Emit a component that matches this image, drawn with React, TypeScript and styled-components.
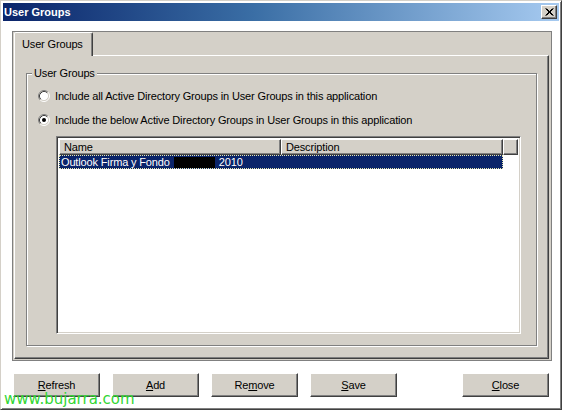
import React from "react";
import styled, { createGlobalStyle } from "styled-components";

const Global = createGlobalStyle`
  html, body { margin: 0; padding: 0; background: #ffffff; }
  body { font-family: "Liberation Sans", Arial, sans-serif; font-size: 11px; color: #000; letter-spacing: -0.15px; }
  * { box-sizing: border-box; }
`;

const Window = styled.div`
  position: relative;
  width: 562px;
  height: 410px;
  background: #ffffff;
  border: 1px solid;
  border-color: #d4d0c8 #404040 #404040 #d4d0c8;
  box-shadow: inset 1px 1px 0 #ffffff, inset -1px -1px 0 #808080;
  padding: 2px;
  display: flex;
  flex-direction: column;
  overflow: hidden;
`;

const TitleBar = styled.div`
  height: 18px;
  flex: none;
  display: flex;
  align-items: center;
  justify-content: space-between;
  padding: 0 2px 0 1px;
  background: linear-gradient(to right, #0a246a 0%, #3a6ea5 45%, #a6caf0 100%);
`;

const TitleText = styled.span`
  color: #ffffff;
  font-weight: bold;
  font-size: 11px;
  letter-spacing: 0;
  font-family: "Liberation Sans", Arial, sans-serif;
`;

const CloseBtn = styled.div`
  width: 16px;
  height: 14px;
  background: #d4d0c8;
  border: 1px solid;
  border-color: #ffffff #404040 #404040 #ffffff;
  box-shadow: inset -1px -1px 0 #808080;
  display: flex;
  align-items: center;
  justify-content: center;
`;

const Body = styled.div`
  flex: 1;
  display: flex;
  flex-direction: column;
  padding: 10px 8px 0 9px;
`;

const Panel = styled.div`
  height: 330px;
  width: 540px;
  background: #d4d0c8;
  border: 1px solid #808080;
  padding: 1px 2px 1px 1px;
  display: flex;
  flex-direction: column;
`;

const TabStrip = styled.div`
  height: 23px;
  display: flex;
  align-items: flex-end;
  position: relative;
  z-index: 1;
  margin-bottom: -1px;
`;

const Tab = styled.div`
  height: 24px;
  width: 79px;
  background: #d4d0c8;
  border: 1px solid;
  border-bottom: none;
  border-color: #ffffff #404040 transparent #ffffff;
  box-shadow: inset -1px 0 0 #808080;
  border-radius: 2px 2px 0 0;
  display: flex;
  align-items: center;
  padding-left: 7px;
  padding-bottom: 1px;
`;

const Page = styled.div`
  flex: 1;
  display: flex;
  flex-direction: column;
  border: 1px solid;
  border-color: #ffffff #404040 #404040 #ffffff;
  box-shadow: inset -1px -1px 0 #808080;
  padding: 17px 11px 12px 11px;
`;

const Group = styled.div`
  position: relative;
  flex: 1;
  display: flex;
  flex-direction: column;
  border: 1px solid #808080;
  box-shadow: inset 1px 1px 0 #ffffff, 1px 1px 0 #ffffff;
  padding: 10px 15px 11px 11px;
`;

const Legend = styled.span`
  position: absolute;
  top: -7px;
  left: 5px;
  padding: 0 2px;
  background: #d4d0c8;
  line-height: 13px;
`;

const RadioRow = styled.div`
  height: 24px;
  display: flex;
  align-items: center;
  gap: 5px;
`;

const List = styled.div`
  flex: 1;
  margin-left: 18px;
  margin-top: 4px;
  background: #ffffff;
  border: 1px solid;
  border-color: #808080 #ffffff #ffffff #808080;
  box-shadow: inset 1px 1px 0 #404040, inset -1px -1px 0 #d4d0c8;
  padding: 2px;
  display: flex;
  flex-direction: column;
`;

const Header = styled.div`
  display: flex;
  height: 16px;
  background: #d4d0c8;
`;

const HeadCell = styled.div<{ $w?: number }>`
  ${(p) => (p.$w ? `width: ${p.$w}px;` : "flex: 1;")}
  height: 16px;
  border: 1px solid;
  border-color: #ffffff #404040 #404040 #ffffff;
  box-shadow: inset -1px -1px 0 #808080;
  padding-left: 4px;
  display: flex;
  align-items: center;
`;

const Row = styled.div<{ $w: number }>`
  width: ${(p) => p.$w}px;
  height: 14px;
  background: #0a246a;
  color: #ffffff;
  outline: 1px dotted #e8e8b0;
  outline-offset: -1px;
  display: flex;
  align-items: center;
  padding-left: 2px;
`;

const Redacted = styled.span`
  display: inline-block;
  width: 41px;
  height: 11px;
  background: #000000;
  margin: 0 4px 0 4px;
`;

const Buttons = styled.div`
  display: flex;
  gap: 12px;
  padding: 12px 2px 0 1px;
`;

const Btn = styled.div<{ $push?: boolean }>`
  width: 87px;
  height: 24px;
  background: #d4d0c8;
  border: 1px solid;
  border-color: #ffffff #404040 #404040 #ffffff;
  box-shadow: inset -1px -1px 0 #808080;
  display: flex;
  align-items: center;
  justify-content: center;
  ${(p) => (p.$push ? "margin-left: auto;" : "")}
`;

const Mn = styled.span`
  text-decoration: underline;
`;

const Watermark = styled.div`
  position: absolute;
  left: 3px;
  bottom: 1px;
  color: #33d633;
  font-family: "DejaVu Sans", Verdana, sans-serif;
  font-size: 15px;
  line-height: 17px;
  letter-spacing: 0;
`;

const Radio: React.FC<{ checked?: boolean }> = ({ checked }) => (
  <svg width="12" height="12" viewBox="0 0 12 12">
    <circle cx="6" cy="6" r="4.5" fill="#ffffff" />
    <path d="M 2.11 9.89 A 5.5 5.5 0 0 1 9.89 2.11" stroke="#808080" strokeWidth="1" fill="none" />
    <path d="M 9.89 2.11 A 5.5 5.5 0 0 1 2.11 9.89" stroke="#ffffff" strokeWidth="1" fill="none" />
    <path d="M 2.82 9.18 A 4.5 4.5 0 0 1 9.18 2.82" stroke="#404040" strokeWidth="1" fill="none" />
    <path d="M 9.18 2.82 A 4.5 4.5 0 0 1 2.82 9.18" stroke="#d4d0c8" strokeWidth="1" fill="none" />
    {checked && <circle cx="6" cy="6" r="2" fill="#000000" />}
  </svg>
);

export default function App() {
  return (
    <>
      <Global />
      <Window>
        <TitleBar>
          <TitleText>User Groups</TitleText>
          <CloseBtn>
            <svg width="9" height="8" viewBox="0 0 9 8">
              <path d="M1 0.5 L8 7.5 M2 0.5 L9 7.5 M8 0.5 L1 7.5 M9 0.5 L2 7.5" stroke="#000" strokeWidth="1" transform="translate(-0.5 0)" />
            </svg>
          </CloseBtn>
        </TitleBar>
        <Body>
          <Panel>
            <TabStrip>
              <Tab>User Groups</Tab>
            </TabStrip>
            <Page>
              <Group>
                <Legend>User Groups</Legend>
                <RadioRow>
                  <Radio />
                  <span>Include all Active Directory Groups in User Groups in this application</span>
                </RadioRow>
                <RadioRow>
                  <Radio checked />
                  <span>Include the below Active Directory Groups in User Groups in this application</span>
                </RadioRow>
                <List>
                  <Header>
                    <HeadCell $w={222}>Name</HeadCell>
                    <HeadCell $w={222}>Description</HeadCell>
                    <HeadCell />
                  </Header>
                  <Row $w={444}>
                    <span>Outlook Firma y Fondo</span>
                    <Redacted />
                    <span>2010</span>
                  </Row>
                </List>
              </Group>
            </Page>
          </Panel>
          <Buttons>
            <Btn><span><Mn>R</Mn>efresh</span></Btn>
            <Btn><span><Mn>A</Mn>dd</span></Btn>
            <Btn><span>Re<Mn>m</Mn>ove</span></Btn>
            <Btn><span><Mn>S</Mn>ave</span></Btn>
            <Btn $push><span><Mn>C</Mn>lose</span></Btn>
          </Buttons>
        </Body>
        <Watermark>www.bujarra.com</Watermark>
      </Window>
    </>
  );
}
